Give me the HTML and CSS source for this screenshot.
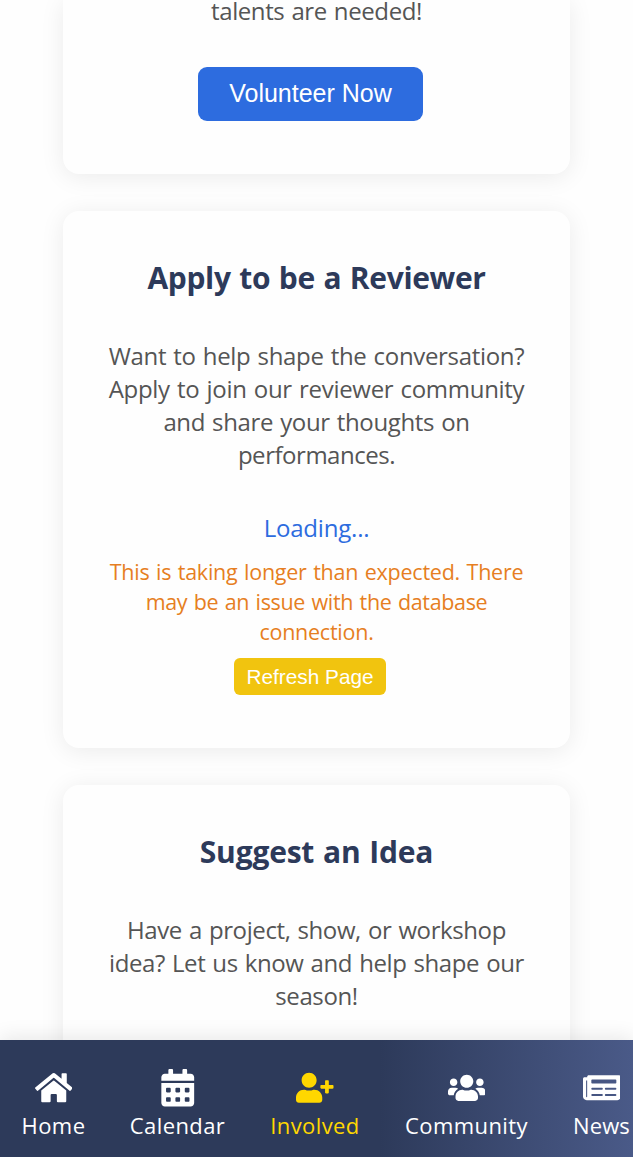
FILE: index.html
```html
<!DOCTYPE html>
<html lang="en">
<head>
<meta charset="utf-8">
<title>Get Involved</title>
<link rel="stylesheet" href="styles.css">
</head>
<body>
<main class="cards">
  <section class="card card-volunteer">
    <p class="copy"><span class="l1">talents are needed!</span></p>
    <button class="btn btn-primary">Volunteer Now</button>
  </section>
  <section class="card card-reviewer">
    <h2 class="title">Apply to be a Reviewer</h2>
    <p class="copy"><span class="l2">Want to help shape the conversation?</span><br><span class="l3">Apply to join our reviewer community</span><br><span class="l4">and share your thoughts on</span><br><span class="l5">performances.</span></p>
    <p class="loading">Loading...</p>
    <p class="warning"><span class="w1">This is taking longer than expected. There</span><br><span class="w2">may be an issue with the database</span><br><span class="w3">connection.</span></p>
    <button class="btn btn-refresh">Refresh Page</button>
  </section>
  <section class="card card-idea">
    <h2 class="title title-idea">Suggest an Idea</h2>
    <p class="copy"><span class="l6">Have a project, show, or workshop</span><br><span class="l7">idea? Let us know and help shape our</span><br><span class="l8">season!</span></p>
  </section>
</main>
<nav class="nav">
  <a class="item home"><svg class="icon" viewBox="0 0 576 512"><path d="M280.37 148.26L96 300.11V464a16 16 0 0 0 16 16l112.06-.29a16 16 0 0 0 15.92-16V368a16 16 0 0 1 16-16h64a16 16 0 0 1 16 16v95.64a16 16 0 0 0 16 16.05L464 480a16 16 0 0 0 16-16V300L295.67 148.26a12.19 12.19 0 0 0-15.3 0zM571.6 251.47L488 182.56V44.05a12 12 0 0 0-12-12h-56a12 12 0 0 0-12 12v72.61L318.47 43a48 48 0 0 0-61 0L4.34 251.47a12 12 0 0 0-1.6 16.9l25.5 31A12 12 0 0 0 45.15 301l235.22-193.74a12.19 12.19 0 0 1 15.3 0L530.9 301a12 12 0 0 0 16.9-1.6l25.5-31a12 12 0 0 0-1.7-16.93z"/></svg><span>Home</span></a>
  <a class="item calendar"><svg class="icon" viewBox="0 0 448 512"><path d="M0 464c0 26.5 21.5 48 48 48h352c26.5 0 48-21.5 48-48V192H0v272zm320-196c0-6.6 5.4-12 12-12h40c6.6 0 12 5.4 12 12v40c0 6.6-5.4 12-12 12h-40c-6.6 0-12-5.4-12-12v-40zm0 128c0-6.6 5.4-12 12-12h40c6.6 0 12 5.4 12 12v40c0 6.6-5.4 12-12 12h-40c-6.6 0-12-5.4-12-12v-40zM192 268c0-6.6 5.4-12 12-12h40c6.6 0 12 5.4 12 12v40c0 6.6-5.4 12-12 12h-40c-6.6 0-12-5.4-12-12v-40zm0 128c0-6.6 5.4-12 12-12h40c6.6 0 12 5.4 12 12v40c0 6.6-5.4 12-12 12h-40c-6.6 0-12-5.4-12-12v-40zM64 268c0-6.6 5.4-12 12-12h40c6.6 0 12 5.4 12 12v40c0 6.6-5.4 12-12 12H76c-6.6 0-12-5.4-12-12v-40zm0 128c0-6.6 5.4-12 12-12h40c6.6 0 12 5.4 12 12v40c0 6.6-5.4 12-12 12H76c-6.6 0-12-5.4-12-12v-40zM400 64h-48V16c0-8.8-7.2-16-16-16h-32c-8.8 0-16 7.2-16 16v48H160V16c0-8.8-7.2-16-16-16h-32c-8.8 0-16 7.2-16 16v48H48C21.5 64 0 85.5 0 112v48h448v-48c0-26.5-21.5-48-48-48z"/></svg><span>Calendar</span></a>
  <a class="item involved"><svg class="icon" viewBox="0 0 640 512"><path d="M624 208h-64v-64c0-8.8-7.2-16-16-16h-32c-8.8 0-16 7.2-16 16v64h-64c-8.8 0-16 7.2-16 16v32c0 8.8 7.2 16 16 16h64v64c0 8.8 7.2 16 16 16h32c8.8 0 16-7.2 16-16v-64h64c8.8 0 16-7.2 16-16v-32c0-8.8-7.2-16-16-16zm-400 48c70.7 0 128-57.3 128-128S294.7 0 224 0 96 57.3 96 128s57.3 128 128 128zm89.6 32h-16.7c-22.2 10.2-46.9 16-72.9 16s-50.6-5.8-72.9-16h-16.7C60.2 288 0 348.2 0 422.4V464c0 26.5 21.5 48 48 48h352c26.5 0 48-21.5 48-48v-41.6c0-74.2-60.2-134.4-134.4-134.4z"/></svg><span>Involved</span></a>
  <a class="item community"><svg class="icon" viewBox="0 0 640 512"><path d="M96 224c35.3 0 64-28.7 64-64s-28.7-64-64-64-64 28.7-64 64 28.7 64 64 64zm448 0c35.3 0 64-28.7 64-64s-28.7-64-64-64-64 28.7-64 64 28.7 64 64 64zm32 32h-64c-17.6 0-33.5 7.1-45.1 18.6 40.3 22.1 68.9 62 75.1 109.4h66c17.7 0 32-14.3 32-32v-32c0-35.3-28.7-64-64-64zm-256 0c61.9 0 112-50.1 112-112S381.9 32 320 32 208 82.1 208 144s50.1 112 112 112zm76.8 32h-8.3c-20.8 10-43.9 16-68.5 16s-47.6-6-68.5-16h-8.3C179.6 288 128 339.6 128 403.2V432c0 26.5 21.5 48 48 48h288c26.5 0 48-21.5 48-48v-28.8c0-63.6-51.6-115.2-115.2-115.2zm-223.7-13.4C161.5 263.1 145.6 256 128 256H64c-35.3 0-64 28.7-64 64v32c0 17.7 14.3 32 32 32h65.9c6.3-47.4 34.9-87.3 75.2-109.4z"/></svg><span>Community</span></a>
  <a class="item news"><svg class="icon" viewBox="0 0 576 512"><path d="M552 64H88c-13.255 0-24 10.745-24 24v8H24c-13.255 0-24 10.745-24 24v272c0 30.928 25.072 56 56 56h472c26.51 0 48-21.49 48-48V88c0-13.255-10.745-24-24-24zM56 400a8 8 0 0 1-8-8V144h16v248a8 8 0 0 1-8 8zm236-16H140c-6.627 0-12-5.373-12-12v-8c0-6.627 5.373-12 12-12h152c6.627 0 12 5.373 12 12v8c0 6.627-5.373 12-12 12zm208 0H348c-6.627 0-12-5.373-12-12v-8c0-6.627 5.373-12 12-12h152c6.627 0 12 5.373 12 12v8c0 6.627-5.373 12-12 12zm-208-96H140c-6.627 0-12-5.373-12-12v-8c0-6.627 5.373-12 12-12h152c6.627 0 12 5.373 12 12v8c0 6.627-5.373 12-12 12zm208 0H348c-6.627 0-12-5.373-12-12v-8c0-6.627 5.373-12 12-12h152c6.627 0 12 5.373 12 12v8c0 6.627-5.373 12-12 12zm0-96H140c-6.627 0-12-5.373-12-12v-40c0-6.627 5.373-12 12-12h360c6.627 0 12 5.373 12 12v40c0 6.627-5.373 12-12 12z"/></svg><span>News</span></a>
</nav>
</body>
</html>
```
FILE: styles.css
```css
* { box-sizing: border-box; }
body {
  margin: 0;
  height: 1157px;
  overflow: hidden;
  display: flex;
  flex-direction: column;
  background: #fefefe;
  font-family: "Open Sans", "Noto Sans", sans-serif;
}
.cards {
  height: 1040px;
  flex: none;
  display: flex;
  flex-direction: column;
  gap: 37px;
  padding: 0 63px;
}
.card {
  flex: none;
  display: flex;
  flex-direction: column;
  align-items: center;
  background: #fefefe;
  border-radius: 16px;
  box-shadow: 0 3px 25px rgba(0, 0, 0, 0.08);
  text-align: center;
  white-space: nowrap;
  word-spacing: 1.2px;
}
.card-volunteer { height: 174px; border-radius: 0 0 16px 16px; }
.card-reviewer { height: 537px; padding-top: 45px; }
.card-idea { height: 290px; padding-top: 45px; }
.title {
  margin: 0 0 40px;
  font-size: 30px;
  line-height: 43px;
  font-weight: 700;
  color: #2d3a5a;
  letter-spacing: -0.35px;
}
.title-idea { letter-spacing: -0.2px; }
.copy {
  margin: 0;
  font-size: 24px;
  line-height: 33px;
  color: #555;
  letter-spacing: -0.4px;
}
.l2 { letter-spacing: -0.32px; }
.l3 { letter-spacing: -0.29px; }
.l4 { letter-spacing: -0.36px; }
.l5 { letter-spacing: -0.47px; }
.card-volunteer .copy { margin-top: -6px; }
.btn {
  border: 0;
  padding: 0;
  margin: 0 12px 0 0;
  color: #fff;
  font-family: "Liberation Sans", Arial, sans-serif;
  word-spacing: 0;
}
.btn-primary {
  width: 225px;
  height: 54px;
  margin-top: 40px;
  padding-bottom: 2px;
  border-radius: 9px;
  background: #2d6cdf;
  font-size: 25px;
}
.loading {
  margin: 40px 0 0;
  font-size: 24px;
  line-height: 33px;
  color: #2d6cdf;
  letter-spacing: -0.2px;
}
.warning {
  margin: 13px 0 0;
  font-size: 21.5px;
  line-height: 30px;
  color: #e67e22;
  letter-spacing: -0.24px;
}
.w2 { letter-spacing: -0.34px; }
.btn-refresh {
  width: 152px;
  height: 37px;
  margin: 11px 13px 0 0;
  border-radius: 6px;
  background: #f1c40f;
  font-size: 20.8px;
}
.nav {
  flex: none;
  height: 117px;
  display: flex;
  gap: 46px;
  padding: 29px 0 0 22.5px;
  background: linear-gradient(90deg, #2d3a5a 60%, #4a5a88 100%);
  box-shadow: 0 -3px 19px rgba(0, 0, 0, 0.09);
  z-index: 1;
}
.item {
  flex: none;
  display: flex;
  flex-direction: column;
  align-items: center;
  gap: 3px;
  color: #fff;
  font-size: 22px;
  line-height: 30px;
  letter-spacing: 0.4px;
  white-space: nowrap;
}
.icon { width: 37.5px; height: 37.5px; fill: currentColor; }
.home { width: 62px; }
.calendar { width: 94px; }
.involved { width: 89px; color: #ffd700; }
.community { width: 122px; }
.news { width: 56px; letter-spacing: 0.1px; }
```
